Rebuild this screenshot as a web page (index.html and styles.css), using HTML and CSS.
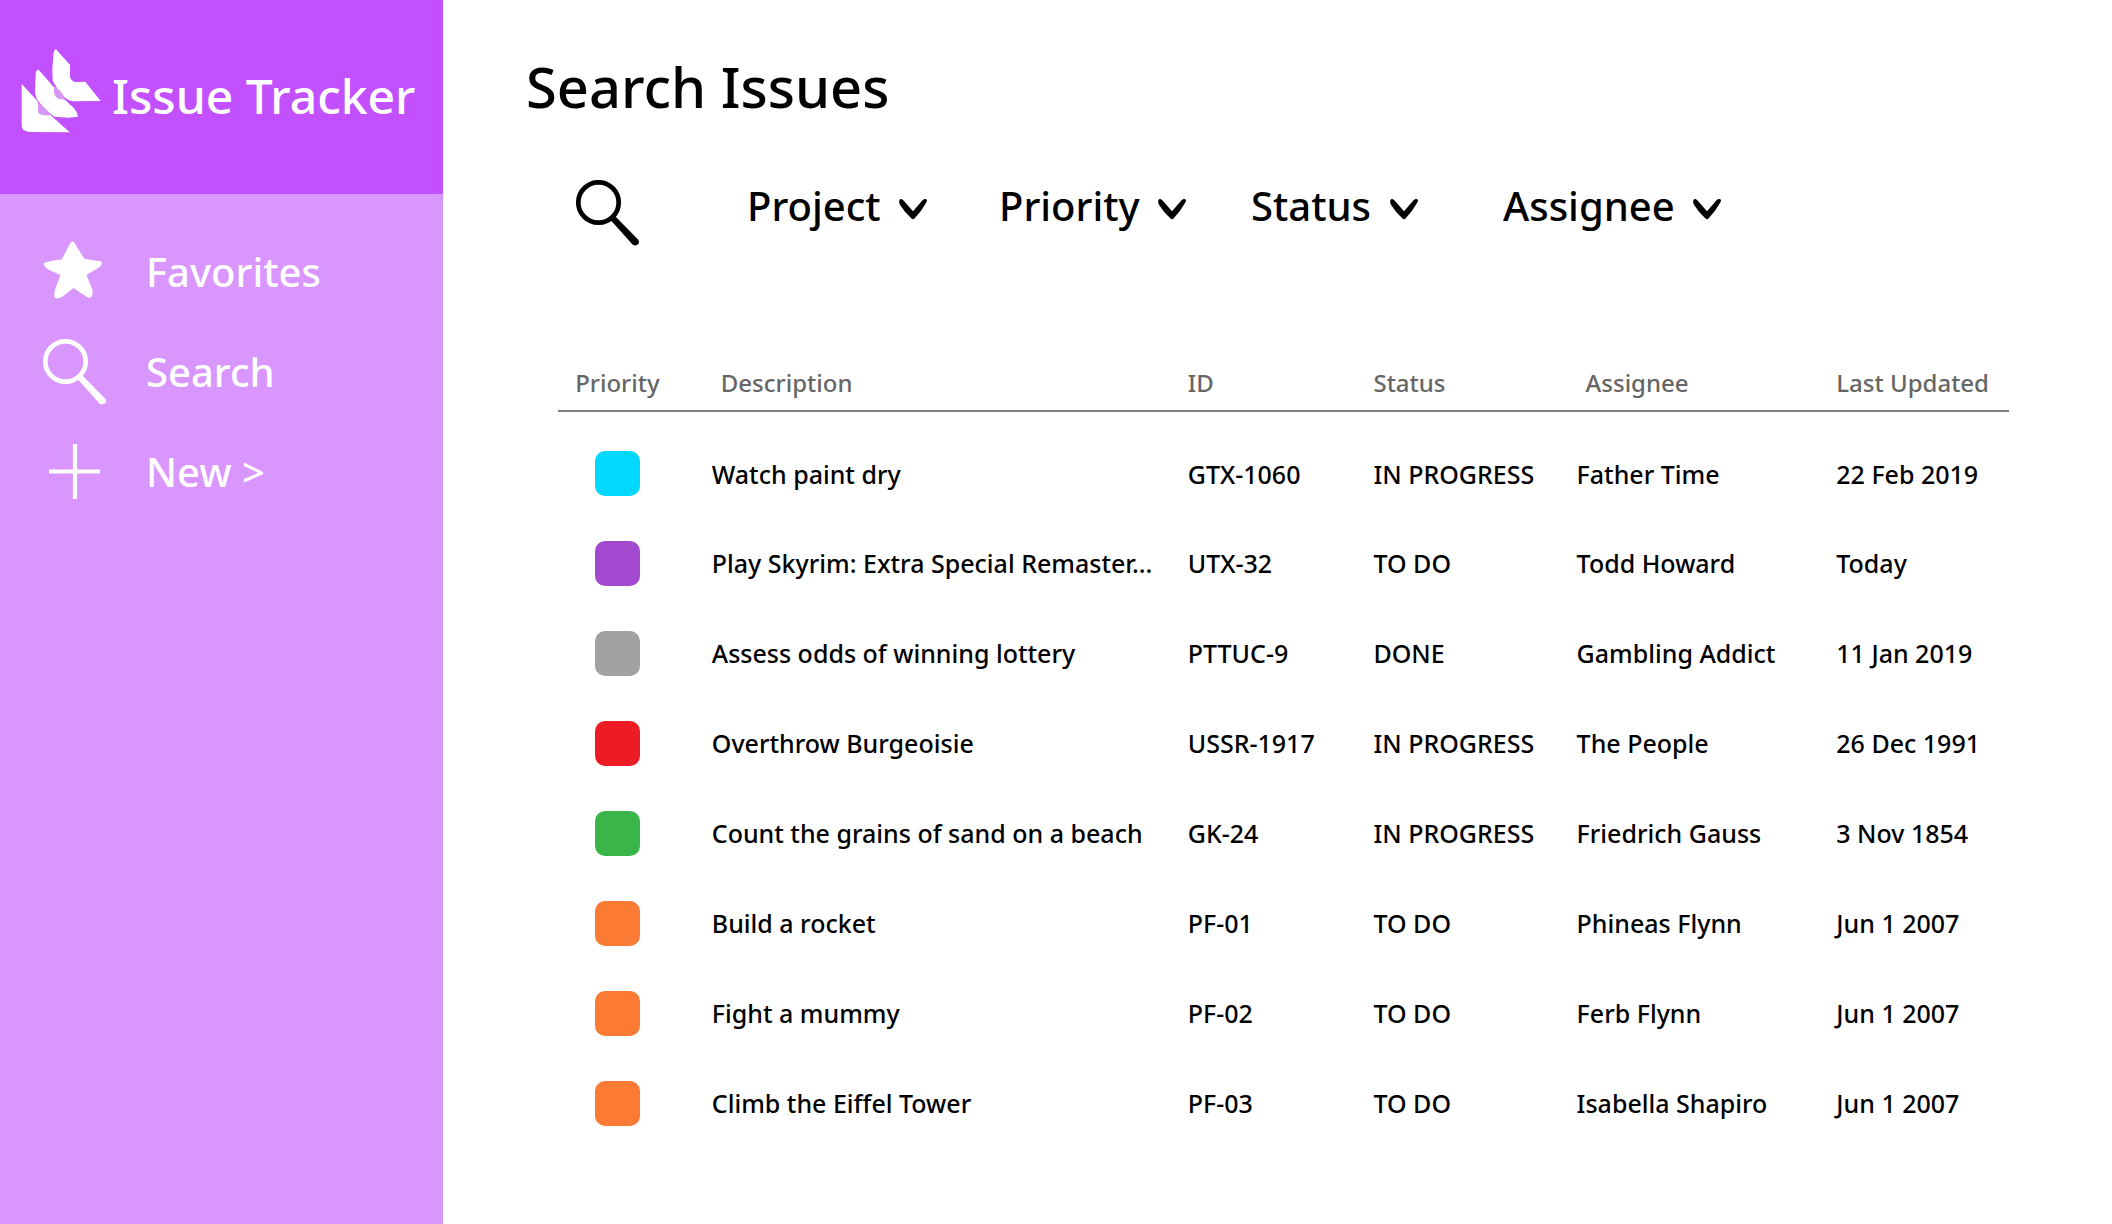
FILE: index.html
```html
<!DOCTYPE html>
<html lang="en">
<head>
  <meta charset="utf-8">
  <meta name="viewport" content="width=device-width, initial-scale=1">
  <title>Issue Tracker</title>
  <link rel="stylesheet" href="styles.css">
</head>
<body>
  <svg class="sprite" aria-hidden="true">
    <symbol id="magnifier" viewBox="0 0 64 66">
      <circle cx="22.500" cy="22.500" r="20.200" fill="none" stroke="currentColor" stroke-width="4.700"/>
      <path d="M35 40.500 39.500 36.500 62 59.500Q64 62 62.200 64.300 59.500 66.500 56.500 64.500Z" fill="currentColor"/>
    </symbol>
    <symbol id="chevron" viewBox="0 0 28 22">
      <path d="M.3 2.500Q1 .5 3 1.200 4 1.600 5 3L14 13.200 23.500 2.300Q25.500.3 27.300 1.200 28.600 2.300 27.300 4.500 22 14 15.500 20.500 14 22 12.500 20.500 5 13.500.8 6.500-.2 4.500.3 2.500Z" fill="currentColor"/>
    </symbol>
  </svg>

  <div class="app">
    <aside class="sidebar">
      <a class="brand" href="#">
        <svg class="brand-logo" viewBox="63 147 240 252" aria-hidden="true">
          <path d="M168 148 210 195 210 230Q214 245 228 246L256 245 302 303 217 304Q195 300 172 266L158 242 157 210 160 165Q162 148 168 148Z" fill="#fff"/>
          <path d="M116 209 163 263 163 280Q168 297 190 298L196 300 215 318Q230 330 234 350L205 353 163 350Q130 325 110 296L105 278 107 222Q108 208 116 209Z" fill="#fff"/>
          <path d="M65 252 113 304 116 338Q122 346 152 346L209 397 90 396Q65 394 65 378Z" fill="#fff"/>
          <path d="M162 258 182 274 196 297 180 298Q166 294 164 282Z M113 305 130 322 157 345 130 345Q117 344 116 334Z" fill="#d896f5"/>
        </svg>
        <span class="brand-name">Issue Tracker</span>
      </a>
      <nav class="nav" aria-label="Main">
        <a class="nav-item" href="#">
          <svg class="nav-icon" viewBox="0 0 64 66" aria-hidden="true">
            <path d="M29.500 2.500Q31 2.500 33 6.500L41 19.500Q44 20.800 58 22.300 60.500 25.500 56 28.500L43.500 36 49.500 51Q50 57 47.500 58.500 45 59.500 41 56L30.500 49 19 58Q14 60.500 11.500 58.500 11 53 12.500 49L17.500 36 5 30.500Q0 26.500 1 24 8 21.500 18.500 20.500L26 6.500Q28 2.500 29.500 2.500Z" fill="currentColor"/>
          </svg>
          <span>Favorites</span>
        </a>
        <a class="nav-item" href="#">
          <svg class="nav-icon" aria-hidden="true"><use href="#magnifier"/></svg>
          <span>Search</span>
        </a>
        <a class="nav-item" href="#">
          <svg class="nav-icon" viewBox="0 0 64 66" aria-hidden="true">
            <path d="M32 5V60M6 32.500H57" fill="none" stroke="currentColor" stroke-width="4.200"/>
          </svg>
          <span>New &gt;</span>
        </a>
      </nav>
    </aside>

    <main class="main">
      <h1 class="title">Search Issues</h1>

      <form class="filters">
        <button class="search-button" type="button" aria-label="Search">
          <svg class="nav-icon" aria-hidden="true"><use href="#magnifier"/></svg>
        </button>
        <div class="filter-list">
          <label class="filter">
            <select class="filter-select" aria-label="Project"><option>Project</option></select>
            <svg class="chevron" aria-hidden="true"><use href="#chevron"/></svg>
          </label>
          <label class="filter">
            <select class="filter-select" aria-label="Priority"><option>Priority</option></select>
            <svg class="chevron" aria-hidden="true"><use href="#chevron"/></svg>
          </label>
          <label class="filter">
            <select class="filter-select" aria-label="Status"><option>Status</option></select>
            <svg class="chevron" aria-hidden="true"><use href="#chevron"/></svg>
          </label>
          <label class="filter">
            <select class="filter-select" aria-label="Assignee"><option>Assignee</option></select>
            <svg class="chevron" aria-hidden="true"><use href="#chevron"/></svg>
          </label>
        </div>
      </form>

      <table class="issues">
        <colgroup>
          <col class="col-priority"><col class="col-description"><col class="col-id">
          <col class="col-status"><col class="col-assignee"><col class="col-updated">
        </colgroup>
        <thead>
          <tr>
            <th class="priority" scope="col">Priority</th>
            <th class="inset" scope="col">Description</th>
            <th scope="col">ID</th>
            <th scope="col">Status</th>
            <th class="inset" scope="col">Assignee</th>
            <th scope="col">Last Updated</th>
          </tr>
        </thead>
        <tbody>
          <tr><td class="priority"><span class="swatch cyan"></span></td><td>Watch paint dry</td><td>GTX-1060</td><td>IN PROGRESS</td><td>Father Time</td><td>22 Feb 2019</td></tr>
          <tr><td class="priority"><span class="swatch purple"></span></td><td>Play Skyrim: Extra Special Remaster...</td><td>UTX-32</td><td>TO DO</td><td>Todd Howard</td><td>Today</td></tr>
          <tr><td class="priority"><span class="swatch gray"></span></td><td>Assess odds of winning lottery</td><td>PTTUC-9</td><td>DONE</td><td>Gambling Addict</td><td>11 Jan 2019</td></tr>
          <tr><td class="priority"><span class="swatch red"></span></td><td>Overthrow Burgeoisie</td><td>USSR-1917</td><td>IN PROGRESS</td><td>The People</td><td>26 Dec 1991</td></tr>
          <tr><td class="priority"><span class="swatch green"></span></td><td>Count the grains of sand on a beach</td><td>GK-24</td><td>IN PROGRESS</td><td>Friedrich Gauss</td><td>3 Nov 1854</td></tr>
          <tr><td class="priority"><span class="swatch orange"></span></td><td>Build a rocket</td><td>PF-01</td><td>TO DO</td><td>Phineas Flynn</td><td>Jun 1 2007</td></tr>
          <tr><td class="priority"><span class="swatch orange"></span></td><td>Fight a mummy</td><td>PF-02</td><td>TO DO</td><td>Ferb Flynn</td><td>Jun 1 2007</td></tr>
          <tr><td class="priority"><span class="swatch orange"></span></td><td>Climb the Eiffel Tower</td><td>PF-03</td><td>TO DO</td><td>Isabella Shapiro</td><td>Jun 1 2007</td></tr>
        </tbody>
      </table>
    </main>
  </div>
</body>
</html>
```
FILE: styles.css
```css
* {
  box-sizing: border-box;
}

body {
  margin: 0;
  background: #fff;
  color: #000;
  font-family: "Noto Sans", "Open Sans", sans-serif;
  font-weight: 500;
}

.sprite {
  display: none;
}

.app {
  display: flex;
  min-height: 100vh;
}

/* Sidebar */
.sidebar {
  flex: 0 0 443px;
  background: #da96ff;
  color: #fff;
}

.brand {
  display: flex;
  align-items: center;
  gap: 11px;
  height: 194px;
  padding: 0 0 12px 21px;
  background: #c250ff;
  color: inherit;
  text-decoration: none;
  white-space: nowrap;
}

.brand-logo {
  flex: none;
  width: 80px;
  height: 84px;
}

.brand-name {
  font-size: 48px;
  line-height: 64px;
  padding-top: 10px;
}

.nav {
  padding-top: 28px;
}

.nav-item {
  display: flex;
  align-items: center;
  gap: 39px;
  height: 100px;
  padding-left: 43px;
  color: inherit;
  font-size: 40px;
  line-height: 56px;
  text-decoration: none;
}

.nav-icon {
  display: block;
  flex: none;
  width: 64px;
  height: 66px;
}

/* Main area */
.main {
  flex: 1;
  min-width: 0;
  padding: 46px 103px 56px 83px;
}

.title {
  margin: 0;
  font-size: 56px;
  font-weight: 500;
  line-height: 80px;
}

.filters {
  display: flex;
  align-items: center;
  margin: 52px 0 107px 50px;
}

.search-button {
  padding: 0;
  border: 0;
  background: none;
  color: inherit;
  cursor: pointer;
}

.filter-list {
  display: grid;
  flex: 1;
  grid-template-columns: repeat(4, minmax(0, 252px));
  margin-left: 107px;
  padding-bottom: 14px;
}

.filter {
  display: flex;
  align-items: center;
}

.filter-select {
  appearance: none;
  margin: 0 -28px 0 0;
  padding: 0 46px 0 0;
  border: 0;
  background: none;
  color: inherit;
  font: inherit;
  font-size: 40px;
  line-height: 56px;
  cursor: pointer;
}

.chevron {
  flex: none;
  width: 28px;
  height: 22px;
  margin-top: 6px;
  pointer-events: none;
}

/* Issue table */
.issues {
  width: calc(100% - 32px);
  margin-left: 32px;
  border-collapse: collapse;
  table-layout: fixed;
  font-size: 25px;
  line-height: 36px;
  text-align: left;
  white-space: nowrap;
}

.col-priority { width: 10.6%; }
.col-description { width: 32.8%; }
.col-id { width: 12.8%; }
.col-status { width: 14%; }
.col-assignee { width: 17.9%; }
.col-updated { width: 11.9%; }

.issues th {
  height: 56px;
  padding: 0;
  border-bottom: 2px solid #808080;
  color: #666;
  font-size: 24px;
  font-weight: 500;
}

.issues th.inset {
  padding-left: 9px;
}

.issues td {
  height: 90px;
  padding: 2px 0 0;
}

.issues tbody tr:first-child td {
  height: 106px;
  padding-top: 18px;
}

.issues .priority {
  padding-right: 35px;
  text-align: center;
}

.swatch {
  display: block;
  width: 45px;
  height: 45px;
  margin: 0 auto;
  border-radius: 10px;
}

.cyan { background: #00d8ff; }
.purple { background: #a349cf; }
.gray { background: #a2a2a2; }
.red { background: #ed1c24; }
.green { background: #3ab54a; }
.orange { background: #fb7b35; }
```
